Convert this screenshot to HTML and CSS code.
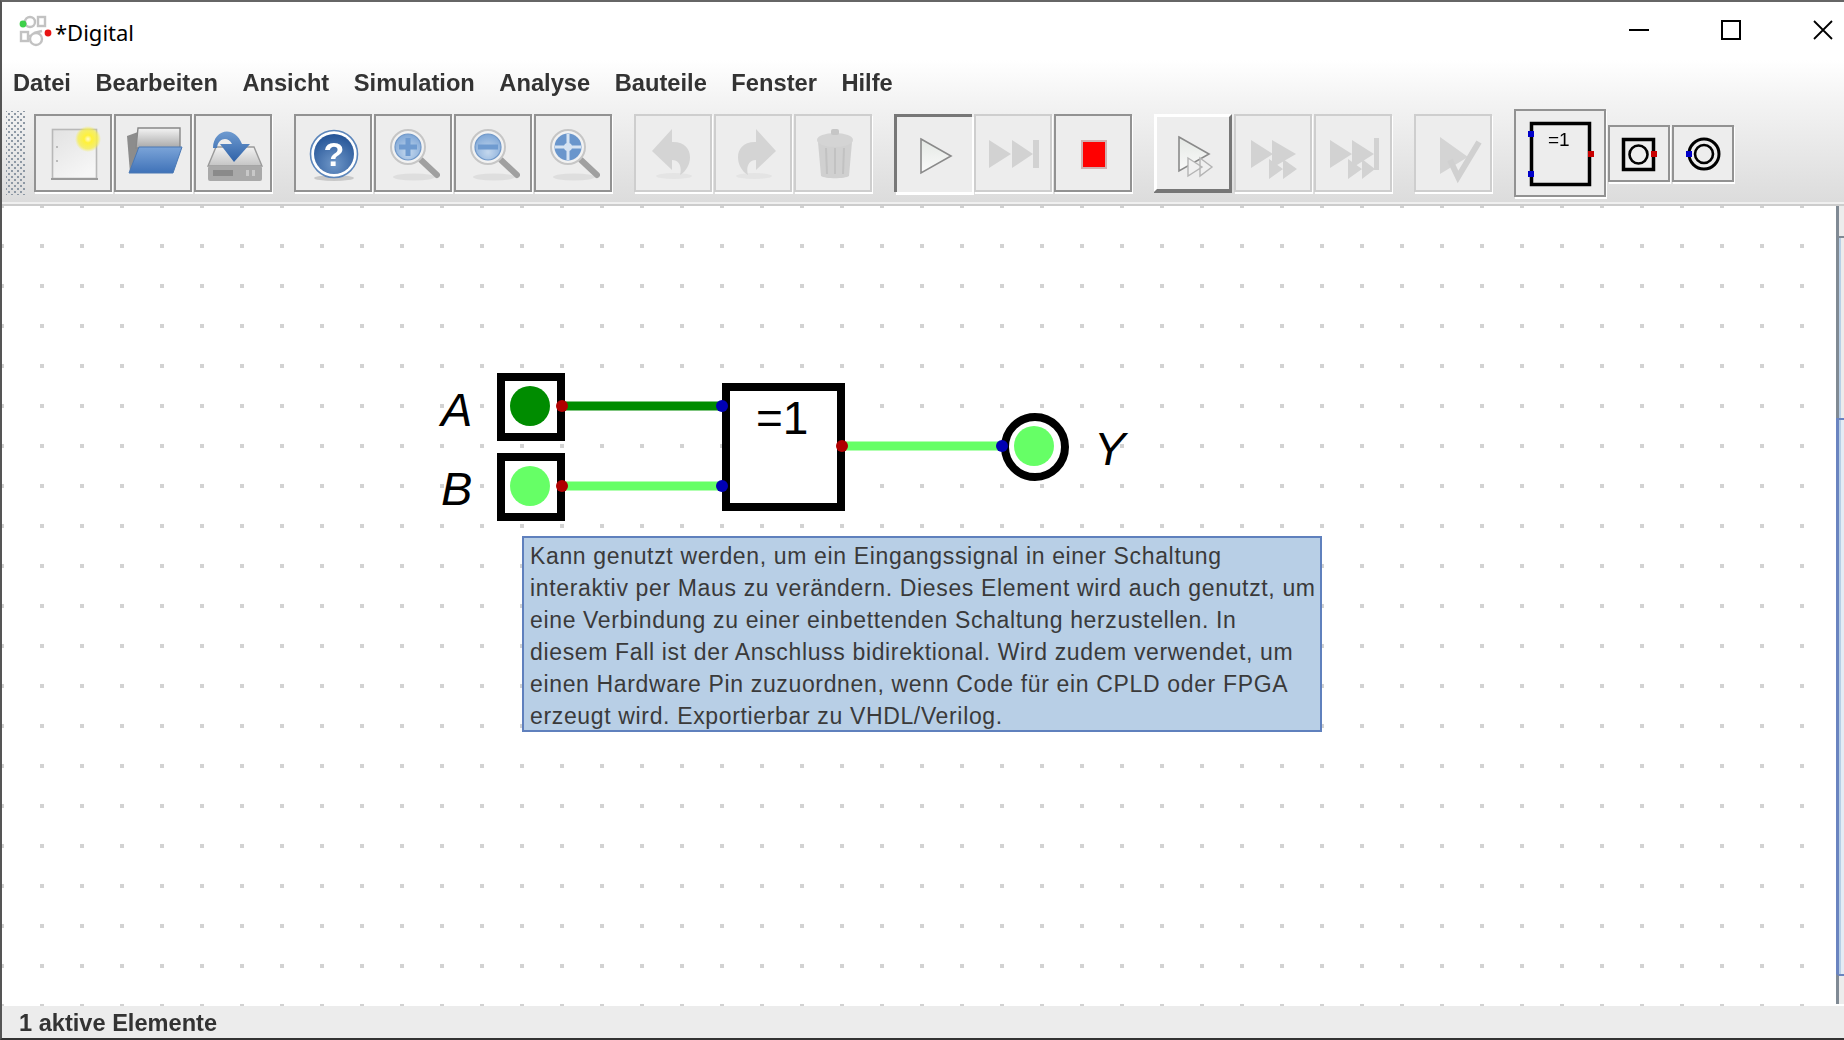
FILE: index.html
```html
<!DOCTYPE html>
<html lang="de">
<head>
  <meta charset="UTF-8" />
  <title>*Digital</title>
  <link rel="stylesheet" href="styles.css">
</head>
<body>
  <svg class="defs" width="0" height="0">
    <defs>
      <linearGradient id="paper" x1="0" y1="0" x2="0.6" y2="1"><stop offset="0" stop-color="#e2e2e2"/><stop offset="1" stop-color="#f6f6f6"/></linearGradient>
      <radialGradient id="glow"><stop offset="0" stop-color="#fffbd0"/><stop offset="0.3" stop-color="#fff13a"/><stop offset="0.75" stop-color="#f6ee50" stop-opacity="0.8"/><stop offset="1" stop-color="#f6ee50" stop-opacity="0"/></radialGradient>
      <linearGradient id="folder" x1="0" y1="0" x2="0" y2="1"><stop offset="0" stop-color="#7ba4d8"/><stop offset="1" stop-color="#3f72b8"/></linearGradient>
      <linearGradient id="sheet" x1="0" y1="0" x2="0" y2="1"><stop offset="0" stop-color="#f4f4f4"/><stop offset="1" stop-color="#a8a8a8"/></linearGradient>
      <linearGradient id="drive" x1="0" y1="0" x2="0" y2="1"><stop offset="0" stop-color="#f2f2f2"/><stop offset="1" stop-color="#c4c4c4"/></linearGradient>
      <linearGradient id="arrow" x1="0" y1="0" x2="0" y2="1"><stop offset="0" stop-color="#6f9bd0"/><stop offset="1" stop-color="#2f62a8"/></linearGradient>
      <radialGradient id="ball" cx="0.5" cy="0.75" r="0.8"><stop offset="0" stop-color="#6f97c8"/><stop offset="1" stop-color="#1f4f93"/></radialGradient>
      <radialGradient id="lens" cx="0.5" cy="0.7" r="0.7"><stop offset="0" stop-color="#c4d8ee"/><stop offset="1" stop-color="#7ea6d6"/></radialGradient>
      <linearGradient id="tri" x1="0" y1="0" x2="0" y2="1"><stop offset="0" stop-color="#e4e8e4"/><stop offset="1" stop-color="#fafafa"/></linearGradient>
      <pattern id="dots" patternUnits="userSpaceOnUse" x="40" y="4" width="40" height="40"><rect width="4" height="4" fill="#d2d2d2"/></pattern>
    </defs>
  </svg>

  <div class="window">
    <div class="chrome">
      <div class="titlebar">
        <svg class="app-icon" width="36" height="36" viewBox="0 0 36 36">
          <g fill="none" stroke="#b4b4b4" stroke-width="2.4" opacity="0.8">
            <circle cx="14" cy="10" r="5"/><rect x="22" y="5" width="7" height="9"/>
            <circle cx="20" cy="27" r="6"/><rect x="5" y="20" width="7" height="9"/>
            <path d="M7 12h4M18 21l8-2M12 24h3"/>
          </g>
          <circle cx="7" cy="12" r="3.4" fill="#3ed04a"/>
          <circle cx="32" cy="21" r="3.4" fill="#e81414"/>
        </svg>
        <span class="app-title">*Digital</span>
        <div class="win-buttons">
          <svg width="20" height="20" viewBox="0 0 20 20"><path d="M0 10h20" stroke="#000" stroke-width="2"/></svg>
          <svg width="20" height="20" viewBox="0 0 20 20"><rect x="1" y="1" width="18" height="18" fill="none" stroke="#000" stroke-width="2"/></svg>
          <svg width="20" height="20" viewBox="0 0 20 20"><path d="M1 1l18 18M19 1L1 19" stroke="#000" stroke-width="1.8"/></svg>
        </div>
      </div>

      <div class="menubar">
        <span>Datei</span><span>Bearbeiten</span><span>Ansicht</span><span>Simulation</span><span>Analyse</span><span>Bauteile</span><span>Fenster</span><span>Hilfe</span>
      </div>

      <div class="toolbar">
        <div class="grip"></div>

        <div class="tb-group">
          <div class="tb-btn">
            <svg viewBox="0 0 74 74"><rect x="16.5" y="13.5" width="44" height="49" fill="url(#paper)" stroke="#b8b8b8" stroke-width="1.6"/><path d="M15 63h47" stroke="#9a9a9a" stroke-width="2"/><circle cx="21" cy="31" r="1" fill="#aaa"/><circle cx="21" cy="45" r="1" fill="#aaa"/><circle cx="52" cy="23" r="13" fill="url(#glow)"/></svg>
          </div>
          <div class="tb-btn">
            <svg viewBox="0 0 74 74"><path d="M11 20l11-4v38l-8 3z" fill="#8c8c8c"/><path d="M22 12h42v20H20z" fill="url(#sheet)" stroke="#888" stroke-width="1.4"/><path d="M23 31h43l-9 26H13z" fill="url(#folder)" stroke="#4a78b4" stroke-width="1"/></svg>
          </div>
          <div class="tb-btn">
            <svg viewBox="0 0 74 74"><path d="M20 31h38l8 19H12z" fill="url(#drive)" stroke="#9a9a9a" stroke-width="1.4"/><rect x="12" y="50" width="54" height="15" rx="2" fill="#a9a9a9"/><rect x="17" y="54" width="20" height="6" fill="#8a8a8a"/><rect x="50" y="54" width="3" height="6" fill="#c8c8c8"/><rect x="56" y="54" width="3" height="6" fill="#c8c8c8"/><path d="M17 32C17 14 38 8 46 28h8L38 46 24 28h12C32 20 22 22 21 32z" fill="url(#arrow)"/></svg>
          </div>
        </div>

        <div class="tb-group">
          <div class="tb-btn">
            <svg viewBox="0 0 74 74"><ellipse cx="38" cy="62" rx="20" ry="3" fill="#c8c8c8"/><circle cx="38" cy="38" r="23.5" fill="#fff" stroke="#5c86bb" stroke-width="1.6"/><circle cx="38" cy="38" r="20" fill="url(#ball)"/><text class="help-mark" x="38" y="50">?</text></svg>
          </div>
          <div class="tb-btn">
            <svg viewBox="0 0 74 74"><ellipse cx="38" cy="61" rx="21" ry="3.5" fill="#dedede"/><path d="M45 44l16 15" stroke="#a0a0a0" stroke-width="6" stroke-linecap="round"/><circle cx="32" cy="31" r="17" fill="#f2f2f2" stroke="#c6c6c6" stroke-width="2"/><circle cx="32" cy="31" r="13" fill="url(#lens)" stroke="#6f97c8" stroke-width="1.2"/><path d="M32 22v18M23 31h18" stroke="#6f9bd0" stroke-width="5"/></svg>
          </div>
          <div class="tb-btn">
            <svg viewBox="0 0 74 74"><ellipse cx="38" cy="61" rx="21" ry="3.5" fill="#dedede"/><path d="M45 44l16 15" stroke="#a0a0a0" stroke-width="6" stroke-linecap="round"/><circle cx="32" cy="31" r="17" fill="#f2f2f2" stroke="#c6c6c6" stroke-width="2"/><circle cx="32" cy="31" r="13" fill="url(#lens)" stroke="#6f97c8" stroke-width="1.2"/><path d="M22 31h20" stroke="#6f9bd0" stroke-width="5"/></svg>
          </div>
          <div class="tb-btn">
            <svg viewBox="0 0 74 74"><ellipse cx="38" cy="61" rx="21" ry="3.5" fill="#dedede"/><path d="M45 44l16 15" stroke="#a0a0a0" stroke-width="6" stroke-linecap="round"/><circle cx="32" cy="31" r="17" fill="#f2f2f2" stroke="#c6c6c6" stroke-width="2"/><circle cx="32" cy="31" r="13.5" fill="#6a96cc"/><path d="M32 18v26M19 31h26" stroke="#d6e3f2" stroke-width="3"/><circle cx="32" cy="31" r="4" fill="#d6e3f2"/></svg>
          </div>
        </div>

        <div class="tb-group">
          <div class="tb-btn off">
            <svg viewBox="0 0 74 74"><ellipse cx="38" cy="60" rx="18" ry="3" fill="#e4e4e4"/><path d="M36 13L16 35l20 19V44c8 0 10 8 8 15 14-8 15-34-8-33z" fill="#d4d4d4"/></svg>
          </div>
          <div class="tb-btn off">
            <svg viewBox="0 0 74 74"><ellipse cx="38" cy="60" rx="18" ry="3" fill="#e4e4e4"/><path d="M40 13l20 22-20 19V44c-8 0-10 8-8 15-14-8-15-34 8-33z" fill="#d4d4d4"/></svg>
          </div>
          <div class="tb-btn off">
            <svg viewBox="0 0 74 74"><path d="M22 26h34l-3 34c-4 3-24 3-28 0z" fill="#d0d0d0"/><ellipse cx="39" cy="24" rx="18" ry="7" fill="#d4d4d4"/><rect x="35" y="13" width="8" height="6" rx="2" fill="#c6c6c6"/><path d="M30 32l1 26M39 32v26M48 32l-1 26" stroke="#c2c2c2" stroke-width="2"/></svg>
          </div>
        </div>

        <div class="tb-group">
          <div class="tb-btn pressed">
            <svg viewBox="0 0 74 74"><path d="M23 21l30 17-30 17z" fill="url(#tri)" stroke="#8a8a8a" stroke-width="1.6"/></svg>
          </div>
          <div class="tb-btn off">
            <svg viewBox="0 0 74 74"><path d="M13 24l22 14-22 14zM36 24l21 14-21 14z" fill="#d2d2d2"/><rect x="57" y="24" width="6" height="28" fill="#d2d2d2"/></svg>
          </div>
          <div class="tb-btn">
            <svg viewBox="0 0 74 74"><rect x="26" y="25" width="24" height="27" fill="#f00" stroke="#d0b0b0" stroke-width="2"/></svg>
          </div>
        </div>

        <div class="tb-group">
          <div class="tb-btn raised">
            <svg viewBox="0 0 74 74"><path d="M23 21l30 17-30 17z" fill="url(#tri)" stroke="#8a8a8a" stroke-width="1.6"/><path d="M32 42l14 9-14 9zM44 42l12 9-12 9z" fill="#f0f0f0" stroke="#b4b4b4" stroke-width="1.4"/></svg>
          </div>
          <div class="tb-btn off">
            <svg viewBox="0 0 74 74"><path d="M15 24l22 14-22 14zM36 24l24 14-24 14z" fill="#d2d2d2"/><path d="M33 43l14 10-14 10zM47 43l14 10-14 10z" fill="#d2d2d2"/></svg>
          </div>
          <div class="tb-btn off">
            <svg viewBox="0 0 74 74"><path d="M14 24l22 14-22 14zM36 24l22 14-22 14z" fill="#d2d2d2"/><rect x="58" y="22" width="5" height="32" fill="#d2d2d2"/><path d="M32 43l14 10-14 10zM46 43l13 10-13 10z" fill="#d2d2d2"/></svg>
          </div>
        </div>

        <div class="tb-group">
          <div class="tb-btn off">
            <svg viewBox="0 0 74 74"><path d="M24 21l28 20-28 17z" fill="#d4d4d4"/><path d="M34 44l8 17 21-35" fill="none" stroke="#d0d0d0" stroke-width="6"/></svg>
          </div>
        </div>

        <div class="tb-group">
          <div class="tb-btn part-gate">
            <svg viewBox="0 0 88 84"><rect x="15.5" y="12.5" width="58" height="61" fill="none" stroke="#000" stroke-width="3.5"/><text class="part-text" x="32" y="35">=1</text><rect x="12" y="20" width="6" height="6" fill="#0000c8"/><rect x="12" y="60" width="6" height="6" fill="#0000c8"/><rect x="72" y="40" width="6" height="6" fill="#c80000"/></svg>
          </div>
          <div class="tb-btn part">
            <svg viewBox="0 0 58 53"><rect x="13.5" y="12.5" width="30" height="30" fill="none" stroke="#000" stroke-width="3.5"/><circle cx="28.5" cy="27.5" r="9" fill="none" stroke="#000" stroke-width="2.6"/><rect x="41" y="24" width="6" height="6" fill="#c80000"/></svg>
          </div>
          <div class="tb-btn part">
            <svg viewBox="0 0 58 53"><circle cx="30" cy="27" r="15" fill="none" stroke="#000" stroke-width="3"/><circle cx="30" cy="27" r="9" fill="none" stroke="#000" stroke-width="2.6"/><rect x="12" y="24" width="6" height="6" fill="#0000c8"/></svg>
          </div>
        </div>
      </div>
    </div>

    <div class="main">
      <div class="canvas">
        <svg class="circuit" viewBox="2 206 1834 800" width="1834" height="800">
          <rect x="2" y="206" width="1834" height="800" fill="url(#dots)"/>

          <path class="wire dark" d="M561 406H722"/>
          <path class="wire" d="M561 486H722"/>
          <path class="wire" d="M842 446H1002"/>

          <text class="label" x="441" y="426">A</text>
          <rect class="part-box" x="501" y="377" width="60" height="60"/>
          <circle cx="530" cy="406" r="20" fill="#008c00"/>
          <text class="label" x="441" y="505">B</text>
          <rect class="part-box" x="501" y="457" width="60" height="60"/>
          <circle cx="530" cy="486" r="20" fill="#66ff66"/>

          <rect class="part-box" x="726" y="387" width="115" height="120"/>
          <text class="gate-text" x="756" y="434">=1</text>

          <circle cx="1035" cy="447" r="30" fill="#fff" stroke="#000" stroke-width="8"/>
          <circle cx="1034" cy="446" r="20" fill="#66ff66"/>
          <text class="label" x="1094" y="465">Y</text>

          <circle class="pin-out" cx="562" cy="406" r="6"/>
          <circle class="pin-out" cx="562" cy="486" r="6"/>
          <circle class="pin-in" cx="722" cy="406" r="6"/>
          <circle class="pin-in" cx="722" cy="486" r="6"/>
          <circle class="pin-out" cx="842" cy="446" r="6"/>
          <circle class="pin-in" cx="1002" cy="446" r="6"/>
        </svg>
        <div class="tooltip">Kann genutzt werden, um ein Eingangssignal in einer Schaltung<br>interaktiv per Maus zu verändern. Dieses Element wird auch genutzt, um<br>eine Verbindung zu einer einbettenden Schaltung herzustellen. In<br>diesem Fall ist der Anschluss bidirektional. Wird zudem verwendet, um<br>einen Hardware Pin zuzuordnen, wenn Code für ein CPLD oder FPGA<br>erzeugt wird. Exportierbar zu VHDL/Verilog.</div>
      </div>
      <div class="scrollbar">
        <div class="sb-arrow top"></div>
        <div class="sb-track"></div>
        <div class="sb-thumb"></div>
        <div class="sb-arrow bottom"></div>
      </div>
    </div>

    <div class="status">1 aktive Elemente</div>
  </div>
</body>
</html>
```

FILE: styles.css
```css
body {
  margin: 0;
  background: #333;
  font-family: "Liberation Sans", Arial, sans-serif;
  overflow: hidden;
}
.defs {
  position: absolute;
}
.window {
  display: flex;
  flex-direction: column;
  width: 1844px;
  height: 1040px;
  box-sizing: border-box;
  border-top: 2px solid #666;
  border-left: 2px solid #555;
  border-bottom: 2px solid #333;
  background: #fff;
}
.chrome {
  height: 204px;
  flex: none;
  box-sizing: border-box;
  background: linear-gradient(#fff 0, #fff 58px, #f3f3f3 100px, #dcdcdc 200px);
  border-bottom: 2px solid #ccc;
  box-shadow: inset 0 -2px 0 #f0f0f0;
}

.titlebar {
  display: flex;
  align-items: center;
  height: 54px;
  padding-left: 14px;
  padding-top: 2px;
  box-sizing: border-box;
}
.app-icon {
  flex: none;
}
.app-title {
  margin-left: 3px;
  padding-top: 4px;
  font-family: "Noto Sans", sans-serif;
  font-size: 22px;
  color: #000;
}
.win-buttons {
  display: flex;
  gap: 72px;
  margin-left: auto;
  margin-right: 11px;
}

.menubar {
  display: flex;
  gap: 24.5px;
  align-items: center;
  height: 52px;
  padding-left: 11px;
  padding-top: 3px;
  box-sizing: border-box;
  font-size: 23.7px;
  font-weight: bold;
  color: #333;
  filter: blur(0.35px);
}

.toolbar {
  display: flex;
  align-items: center;
  gap: 22px;
  height: 90px;
  padding-left: 4px;
}
.grip {
  width: 20px;
  height: 84px;
  margin-right: -14px;
  background-image: radial-gradient(circle, #8d98a4 1px, transparent 1.5px), radial-gradient(circle, #8d98a4 1px, transparent 1.5px);
  background-size: 6px 6px;
  background-position: 0 0, 3px 3px;
}
.tb-group {
  display: flex;
  align-items: center;
  gap: 2px;
}
.tb-btn {
  display: flex;
  align-items: center;
  justify-content: center;
  width: 78px;
  height: 78px;
  box-sizing: border-box;
  border: 2px solid #929292;
  background: #ededed;
  box-shadow: 1px 2px 0 #fff;
}
.tb-btn svg {
  width: 74px;
  height: 74px;
  flex: none;
  filter: blur(0.6px);
}
.tb-btn.off {
  border-color: #cecece;
}
.tb-btn.pressed {
  border-style: solid;
  border-width: 3px 0 0 3px;
  border-color: #777;
  box-shadow: 2px 3px 0 #fff;
}
.tb-btn.raised {
  border-width: 3px;
  border-color: #fff #777 #777 #fff;
  box-shadow: 0 1px 0 #777;
}
.tb-btn.part-gate {
  width: 92px;
  height: 88px;
}
.tb-btn.part-gate svg {
  width: 88px;
  height: 84px;
}
.tb-btn.part {
  width: 62px;
  height: 57px;
}
.tb-btn.part svg {
  width: 58px;
  height: 53px;
}
.help-mark {
  font-size: 34px;
  font-weight: bold;
  fill: #fff;
  text-anchor: middle;
}
.part-text {
  font-size: 19px;
  fill: #000;
}

.main {
  display: flex;
  flex: none;
  height: 800px;
}
.canvas {
  position: relative;
  width: 1834px;
  flex: none;
  background: #fff;
  overflow: hidden;
}
.circuit {
  display: block;
}
.wire {
  fill: none;
  stroke: #66ff66;
  stroke-width: 9;
}
.wire.dark {
  stroke: #008c00;
}
.part-box {
  fill: #fff;
  stroke: #000;
  stroke-width: 8;
}
.pin-out {
  fill: #b00000;
}
.pin-in {
  fill: #0000b4;
}
.label {
  font-size: 47px;
  font-style: italic;
  fill: #000;
}
.gate-text {
  font-size: 46px;
  fill: #000;
}
.tooltip {
  position: absolute;
  left: 520px;
  top: 330px;
  width: 800px;
  height: 196px;
  box-sizing: border-box;
  padding: 2px 0 0 6px;
  border: 2px solid #5f80bd;
  background: #b8cfe6;
  color: #3a3a3a;
  font-size: 23px;
  letter-spacing: 0.65px;
  line-height: 32px;
  white-space: nowrap;
}

.scrollbar {
  display: flex;
  flex-direction: column;
  width: 8px;
  height: 798px;
  flex: none;
  background: #ececec;
}
.sb-arrow {
  box-sizing: border-box;
  border-left: 3px solid #808a94;
}
.sb-arrow.top {
  height: 32px;
  border-bottom: 2px solid #808a94;
}
.sb-arrow.bottom {
  height: 30px;
  border-top: 2px solid #6a84c0;
}
.sb-track {
  height: 180px;
  border-left: 3px solid #808a94;
  box-shadow: inset 2px 0 0 #b8cfe6;
}
.sb-thumb {
  height: 556px;
  box-sizing: border-box;
  border-left: 3px solid #6a84c0;
  border-top: 2px solid #6a84c0;
  background: #e4ecf5;
  box-shadow: inset 2px 0 0 #b8cfe6;
}

.status {
  flex: 1;
  display: flex;
  align-items: center;
  padding-left: 17px;
  padding-top: 3px;
  background: #ececec;
  font-size: 23.6px;
  font-weight: bold;
  color: #333;
  filter: blur(0.35px);
}
```
